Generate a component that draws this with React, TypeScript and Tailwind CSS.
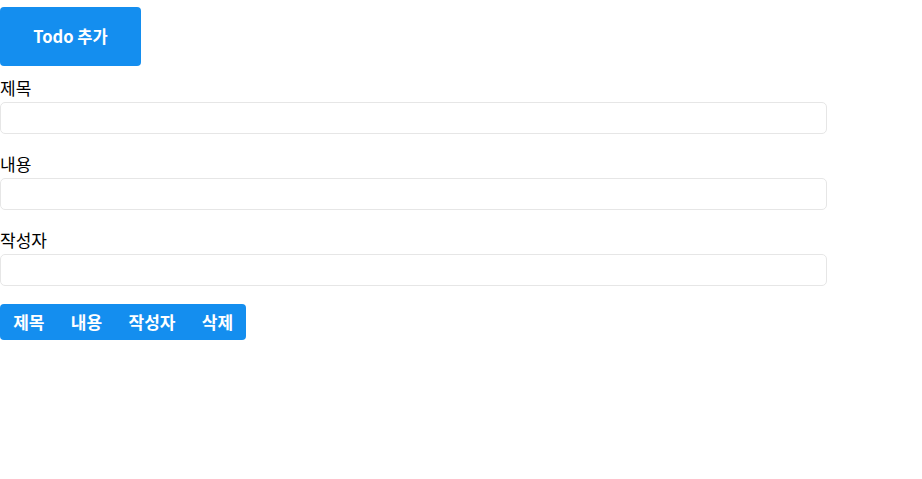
import React from "react";

export default function App() {
  const font = { fontFamily: '"Noto Sans CJK KR", "Noto Sans", sans-serif' };
  return (
    <div className="bg-white text-black w-[922px] h-[479px]" style={font}>
      <div className="pt-[7px]">
        <button className="w-[141px] h-[59px] rounded-[4px] bg-[#148eef] text-white font-bold text-[16.5px] flex items-center justify-center">
          Todo 추가
        </button>
      </div>
      <div className="mt-[12px] flex flex-col">
        <label className="block text-[17px] leading-[18px] h-[24px] pt-[1px]">제목</label>
        <input className="block w-[827px] h-[32px] border border-[#e6e6e6] rounded-[5px] mb-[20px] outline-none" />
        <label className="block text-[17px] leading-[18px] h-[24px] pt-[1px]">내용</label>
        <input className="block w-[827px] h-[32px] border border-[#e6e6e6] rounded-[5px] mb-[20px] outline-none" />
        <label className="block text-[17px] leading-[18px] h-[24px] pt-[1px]">작성자</label>
        <input className="block w-[827px] h-[32px] border border-[#e6e6e6] rounded-[5px] mb-[18px] outline-none" />
      </div>
      <table className="border-collapse">
        <thead>
          <tr className="bg-[#148eef] text-white font-bold text-[17px]">
            <th className="px-[13.2px] h-[36px] rounded-l-[4px] font-bold">제목</th>
            <th className="px-[13.2px] h-[36px] font-bold">내용</th>
            <th className="px-[13.2px] h-[36px] font-bold">작성자</th>
            <th className="px-[13.2px] h-[36px] rounded-r-[4px] font-bold">삭제</th>
          </tr>
        </thead>
      </table>
    </div>
  );
}
